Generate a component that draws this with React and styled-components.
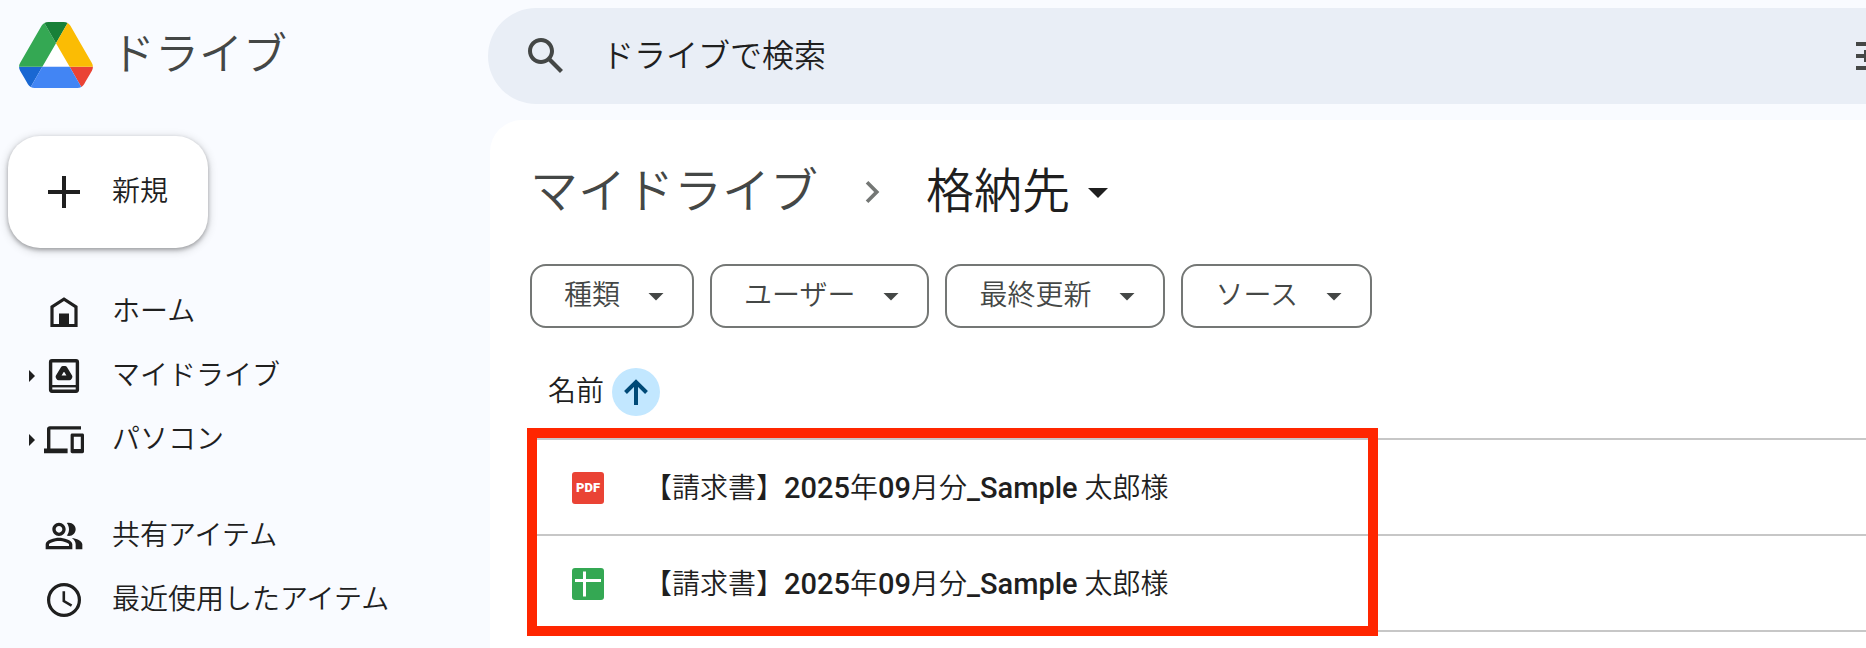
import React, { useState } from 'react';
import styled, { createGlobalStyle } from 'styled-components';


// 左メニュー
const navGroups = [
	[
		{ label: 'ホーム', icon: <HomeIcon /> },
		{ label: 'マイドライブ', icon: <MyDriveIcon />, expandable: true },
		{ label: 'パソコン', icon: <ComputerIcon />, expandable: true },
	],
	[
		{ label: '共有アイテム', icon: <PeopleIcon /> },
		{ label: '最近使用したアイテム', icon: <ClockIcon /> },
	],
];

const filters = ['種類', 'ユーザー', '最終更新', 'ソース'];

const files = [
	{ id: 1, type: 'pdf', name: '【請求書】2025年09月分_Sample 太郎様' },
	{ id: 2, type: 'sheet', name: '【請求書】2025年09月分_Sample 太郎様' },
];


function DriveLogo() {
	return (
		<svg width="74" height="66" viewBox="0 0 87.3 78" aria-hidden="true">
			<path fill="#fff" d="M43.65 25 59.8 53H27.5z" />
			<path fill="#1967d2" d="m6.6 66.85 3.85 6.65c.8 1.4 1.95 2.5 3.3 3.3L27.5 53H0c0 1.55.4 3.1 1.2 4.5z" />
			<path fill="#34a853" d="M43.65 25 29.9 1.2c-1.35.8-2.5 1.9-3.3 3.3l-25.4 44A9.06 9.06 0 0 0 0 53h27.5z" />
			<path fill="#ea4335" d="M73.55 76.8c1.35-.8 2.5-1.9 3.3-3.3l1.6-2.75 7.65-13.25c.8-1.4 1.2-2.95 1.2-4.5H59.8z" />
			<path fill="#188038" d="M43.65 25 57.4 1.2C56.05.4 54.5 0 52.9 0H34.4c-1.6 0-3.15.45-4.5 1.2z" />
			<path fill="#4285f4" d="M59.8 53H27.5L13.75 76.8c1.35.8 2.9 1.2 4.5 1.2h50.8c1.6 0 3.15-.45 4.5-1.2z" />
			<path fill="#fbbc04" d="m73.4 26.5-12.7-22c-.8-1.4-1.95-2.5-3.3-3.3L43.65 25 59.8 53h27.45c0-1.55-.4-3.1-1.2-4.5z" />
		</svg>
	);
}

function HomeIcon() {
	return (
		<svg width="48" height="48" viewBox="0 0 24 24" fill="currentColor" aria-hidden="true">
			<path fillRule="evenodd" d="M12 4.6 18.8 9v10.5H5.2V9zM6.8 9.9V18h2.7v-5.3h5V18h2.7V9.9L12 6.5z" />
		</svg>
	);
}

function MyDriveIcon() {
	return (
		<svg width="48" height="48" viewBox="0 0 24 24" fill="none" stroke="currentColor" aria-hidden="true">
			<rect x="5.3" y="4.4" width="13.4" height="15.2" rx="0.7" strokeWidth="1.7" />
			<path d="M5 17.1h14" strokeWidth="1.2" />
			<path d="M11.5 8.2h1l2.5 4.2-.3.5H9.3l-.3-.5z" strokeWidth="2.4" strokeLinejoin="round" />
		</svg>
	);
}

function ComputerIcon() {
	return (
		<svg width="48" height="48" viewBox="0 0 24 24" fill="currentColor" aria-hidden="true">
			<path d="M5.2 6.7h15.3V5.1H4.9c-.7 0-1.4.6-1.4 1.3v9.8H2v2.4h11.8v-2.4H5.2z" />
			<path fillRule="evenodd" d="M21.2 8.7h-5.1c-.5 0-.8.3-.8.8v8.3c0 .5.3.8.8.8h5.1c.5 0 .8-.3.8-.8V9.5c0-.5-.3-.8-.8-.8zm-.8 7.8h-3.5v-6.1h3.5z" />
		</svg>
	);
}

function PeopleIcon() {
	return (
		<svg width="40" height="40" viewBox="0 0 24 24" fill="currentColor" aria-hidden="true">
			<path d="M16.67 13.13C18.04 14.06 19 15.32 19 17v3h4v-3c0-2.18-3.57-3.47-6.33-3.87z" />
			<path d="M15 12c2.21 0 4-1.79 4-4s-1.79-4-4-4c-.47 0-.91.1-1.33.24C14.5 5.27 15 6.58 15 8s-.5 2.73-1.33 3.76c.42.14.86.24 1.33.24z" />
			<path d="M9 12c2.21 0 4-1.79 4-4s-1.79-4-4-4-4 1.79-4 4 1.79 4 4 4zm0-6c1.1 0 2 .9 2 2s-.9 2-2 2-2-.9-2-2 .9-2 2-2z" />
			<path d="M9 13c-2.67 0-8 1.34-8 4v3h16v-3c0-2.66-5.33-4-8-4zm6 5H3v-.99C3.2 16.29 6.3 15 9 15s5.8 1.29 6 2v1z" />
		</svg>
	);
}

function ClockIcon() {
	return (
		<svg width="48" height="48" viewBox="0 0 24 24" fill="none" stroke="currentColor" aria-hidden="true">
			<circle cx="12" cy="12" r="7.7" strokeWidth="1.6" />
			<path d="M11.9 7.6v4.9l3.9 2.3" strokeWidth="1.3" />
		</svg>
	);
}

function SearchIcon() {
	return (
		<svg width="48" height="48" viewBox="0 0 24 24" fill="currentColor" aria-hidden="true">
			<path d="M20.49 19l-5.73-5.73C15.53 12.2 16 10.91 16 9.5 16 5.91 13.09 3 9.5 3S3 5.91 3 9.5 5.91 16 9.5 16c1.41 0 2.7-.47 3.77-1.24L19 20.49 20.49 19zM5 9.5C5 7.01 7.01 5 9.5 5S14 7.01 14 9.5 11.99 14 9.5 14 5 11.99 5 9.5z" />
		</svg>
	);
}

function TuneIcon() {
	return (
		<svg width="48" height="48" viewBox="0 0 24 24" fill="currentColor" aria-hidden="true">
			<path d="M3 17v2h6v-2H3zM3 5v2h10V5H3zm10 16v-2h8v-2h-8v-2h-2v6h2zM7 9v2H3v2h4v2h2V9H7zm14 4v-2H11v2h10zm-6-4h2V7h4V5h-4V3h-2v6z" />
		</svg>
	);
}

function DropDownIcon({ size }) {
	return (
		<svg width={size} height={size} viewBox="0 0 24 24" fill="currentColor" aria-hidden="true">
			<path d="M7 10l5 5 5-5z" />
		</svg>
	);
}

function SheetIcon() {
	return (
		<svg width="32" height="32" viewBox="0 0 32 32" role="img" aria-label="スプレッドシート">
			<rect width="32" height="32" rx="3" fill="#34a853" />
			<path d="M11 3.5h3V11h15v3H14v14.5h-3V14H3v-3h8z" fill="#fff" />
		</svg>
	);
}

// 英数字だけ中太で表示する
function FileName({ name }) {
	return (
		<FileLink href="#file">
			{name.split(/([\x21-\x7e]+)/).map((part, i) => (
				i % 2 ? <Latin key={i}>{part}</Latin> : part
			))}
		</FileLink>
	);
}


function App() {
	const [keyword, setKeyword] = useState('');

	return (
		<Page>
			<GlobalStyle />
			<Sidebar>
				<Brand href="#home">
					<DriveLogo />
					ドライブ
				</Brand>
				<NewButton type="button">
					<svg width="32" height="32" viewBox="0 0 32 32" aria-hidden="true">
						<path d="M14 0h4v14h14v4H18v14h-4V18H0v-4h14z" fill="currentColor" />
					</svg>
					新規
				</NewButton>
				<Nav>
					{navGroups.map((group, i) => (
						<NavGroup key={i}>
							{group.map((item) => (
								<li key={item.label}>
									<NavLink href="#nav">
										<Expander>
											{item.expandable && (
												<svg width="6" height="12" viewBox="0 0 6 12" aria-hidden="true">
													<path d="M0 0l6 6-6 6z" fill="currentColor" />
												</svg>
											)}
										</Expander>
										<NavIcon>{item.icon}</NavIcon>
										{item.label}
									</NavLink>
								</li>
							))}
						</NavGroup>
					))}
				</Nav>
			</Sidebar>

			<Content>
				<SearchBar role="search">
					<IconButton type="button" aria-label="検索"><SearchIcon /></IconButton>
					<SearchInput
						type="text"
						aria-label="ドライブで検索"
						placeholder="ドライブで検索"
						value={keyword}
						onChange={(e) => setKeyword(e.target.value)}
					/>
					<IconButton type="button" aria-label="検索オプション"><TuneIcon /></IconButton>
				</SearchBar>

				<Panel>
					<Breadcrumb aria-label="パンくずリスト">
						<CrumbLink href="#mydrive">マイドライブ</CrumbLink>
						<Chevron width="44" height="44" viewBox="0 0 24 24" aria-hidden="true">
							<path d="M10 6L8.59 7.41 13.17 12l-4.58 4.59L10 18l6-6z" />
						</Chevron>
						<CrumbButton type="button">
							格納先
							<DropDownIcon size={48} />
						</CrumbButton>
					</Breadcrumb>

					<Filters>
						{filters.map((label) => (
							<Chip key={label} type="button">
								{label}
								<DropDownIcon size={36} />
							</Chip>
						))}
					</Filters>

					<TableArea>
						<FileTable>
							<thead>
								<tr>
									<th scope="col">
										<HeadCell>
											名前
											<SortButton type="button" aria-label="並べ替え">
												<svg width="24" height="26" viewBox="0 0 24 26" aria-hidden="true">
													<path d="M12 26V3M1.500 13.500L12 3l10.500 10.500" fill="none" stroke="currentColor" strokeWidth="4" />
												</svg>
											</SortButton>
										</HeadCell>
									</th>
								</tr>
							</thead>
							<tbody>
								{files.map((file) => (
									<tr key={file.id}>
										<td>
											<FileCell>
												{file.type === 'pdf' ? <PdfBadge>PDF</PdfBadge> : <SheetIcon />}
												<FileName name={file.name} />
											</FileCell>
										</td>
									</tr>
								))}
							</tbody>
						</FileTable>
						<Highlight />
					</TableArea>
				</Panel>
			</Content>
		</Page>
	);
}


const GlobalStyle = createGlobalStyle`
	* {
		box-sizing: border-box;
	}

	body {
		margin: 0;
		background: #f9fbff;
		color: #1f1f1f;
		font-family: Roboto, "Noto Sans CJK JP", sans-serif;
		font-size: 28px;
		font-weight: 350;
		line-height: 40px;
	}

	button, input {
		padding: 0;
		border: 0;
		background: none;
		color: inherit;
		font: inherit;
	}

	a {
		color: inherit;
		text-decoration: none;
	}

	svg {
		display: block;
		flex: none;
	}
`;

const Page = styled.div`
	display: flex;
	min-height: 100vh;
	overflow: hidden;
`;

const Sidebar = styled.aside`
	flex: none;
	width: 488px;
	padding-left: 8px;
`;

const Brand = styled.a`
	display: flex;
	align-items: center;
	gap: 18px;
	height: 110px;
	padding-left: 11px;
	color: #444746;
	font-size: 44px;
	line-height: 64px;
`;

const NewButton = styled.button`
	display: flex;
	align-items: center;
	gap: 32px;
	height: 112px;
	margin-top: 26px;
	padding: 0 40px;
	border-radius: 32px;
	background: #fff;
	box-shadow: 0 2px 4px rgba(0, 0, 0, 0.3), 0 2px 8px 2px rgba(0, 0, 0, 0.12);
`;

const Nav = styled.nav`
	display: flex;
	flex-direction: column;
	gap: 32px;
	margin-top: 32px;
`;

const NavGroup = styled.ul`
	margin: 0;
	padding: 0;
	list-style: none;
`;

const NavLink = styled.a`
	display: flex;
	align-items: center;
	height: 64px;
	padding-left: 16px;
`;

const Expander = styled.span`
	display: flex;
	justify-content: center;
	width: 16px;
`;

const NavIcon = styled.span`
	display: flex;
	justify-content: center;
	width: 48px;
	margin-right: 24px;
`;

const Content = styled.div`
	display: flex;
	flex: 1;
	flex-direction: column;
	min-width: 0;
	padding-top: 8px;
`;

// 右端は画面の外まで続く
const SearchBar = styled.div`
	display: flex;
	align-items: center;
	gap: 32px;
	height: 96px;
	margin-right: -80px;
	padding: 0 48px 0 34px;
	border-radius: 48px;
	background: #e9eef6;
`;

const IconButton = styled.button`
	flex: none;
	color: #444746;
`;

const SearchInput = styled.input`
	flex: 1;
	min-width: 0;
	font-size: 32px;
	line-height: 48px;
	outline: none;

	&::placeholder {
		color: #1f1f1f;
		opacity: 1;
	}
`;

const Panel = styled.main`
	flex: 1;
	margin: 16px 0 0 2px;
	padding: 40px 0 16px 40px;
	border-top-left-radius: 32px;
	background: #fff;
`;

const Breadcrumb = styled.nav`
	display: flex;
	align-items: center;
	gap: 32px;
	font-size: 48px;
	line-height: 64px;
`;

const CrumbLink = styled.a`
	color: #444746;
`;

const Chevron = styled.svg`
	fill: #747775;
`;

const CrumbButton = styled.button`
	display: flex;
	align-items: center;
	gap: 4px;
`;

const Filters = styled.div`
	display: flex;
	gap: 16px;
	margin: 40px 0 16px;
`;

const Chip = styled.button`
	display: flex;
	align-items: center;
	gap: 18px;
	height: 64px;
	padding: 0 18px 0 32px;
	border: 2px solid #747775;
	border-radius: 16px;
	color: #444746;
`;

const TableArea = styled.div`
	position: relative;
`;

const FileTable = styled.table`
	width: 100%;
	border-spacing: 0;

	th, td {
		height: 96px;
		padding: 2px 0 0;
		border-bottom: 2px solid #c7c7c7;
		font-weight: inherit;
		text-align: left;
	}
`;

const HeadCell = styled.div`
	display: flex;
	align-items: center;
	gap: 8px;
	padding-left: 18px;
`;

const SortButton = styled.button`
	display: flex;
	align-items: center;
	justify-content: center;
	width: 48px;
	height: 48px;
	border-radius: 50%;
	background: #c2e7ff;
	color: #004a77;
`;

const FileCell = styled.div`
	display: flex;
	align-items: center;
	gap: 40px;
	padding-left: 42px;
`;

const PdfBadge = styled.span`
	width: 32px;
	height: 32px;
	border-radius: 3px;
	background: #ea4335;
	color: #fff;
	font-size: 13px;
	font-weight: 900;
	line-height: 32px;
	text-align: center;
`;

const FileLink = styled.a`
	white-space: nowrap;
`;

const Latin = styled.span`
	font-size: 29px;
	font-weight: 500;
`;

// 対象ファイルを囲む赤枠
const Highlight = styled.div`
	position: absolute;
	top: 84px;
	left: -3px;
	width: 851px;
	height: 208px;
	border: 10px solid #ff2600;
	pointer-events: none;
`;

export default App;
